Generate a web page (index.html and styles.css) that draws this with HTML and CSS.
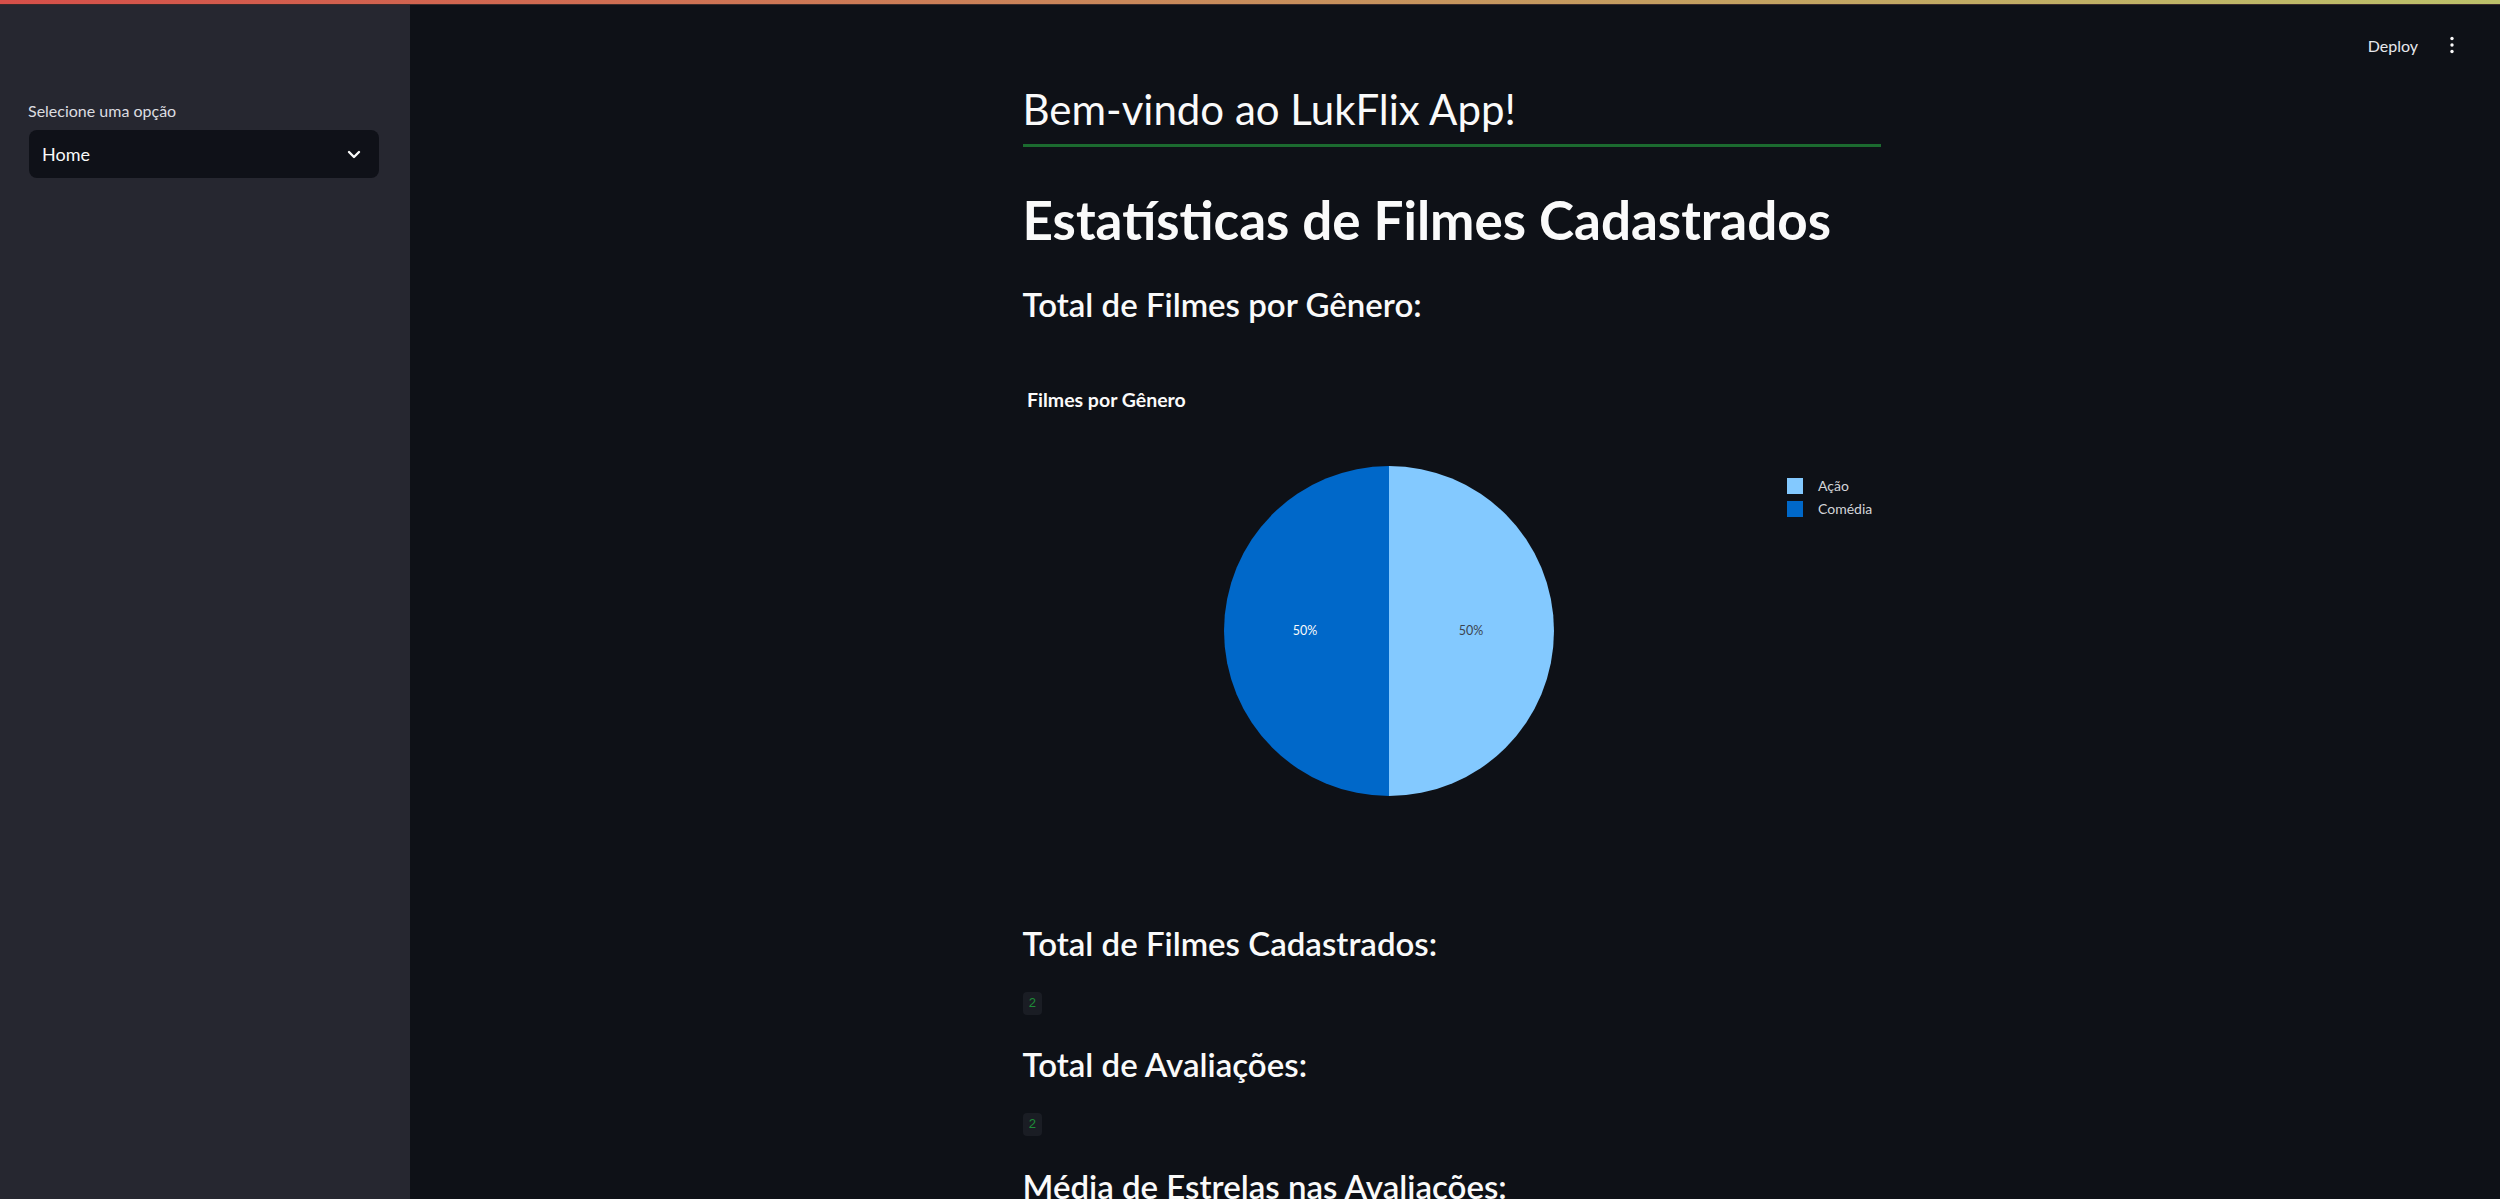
FILE: index.html
```html
<!DOCTYPE html>
<html lang="pt-BR">
<head>
<meta charset="utf-8">
<title>LukFlix App</title>
<link rel="stylesheet" href="styles.css">
</head>
<body>
<div class="decoration"></div>
<div class="app">
  <aside class="sidebar">
    <label class="sb-label">Selecione uma opção</label>
    <div class="select">
      <span class="select-value">Home</span>
      <svg class="chevron" width="14" height="9" viewBox="0 0 14 9"><path d="M2 2 L7 7 L12 2" fill="none" stroke="#fafafa" stroke-width="2.4" stroke-linecap="round" stroke-linejoin="round"/></svg>
    </div>
  </aside>
  <main class="main">
    <header class="topbar">
      <span class="deploy">Deploy</span>
      <svg class="kebab" width="4" height="18" viewBox="0 0 4 18"><circle cx="2" cy="2.5" r="1.7" fill="#fafafa"/><circle cx="2" cy="9" r="1.7" fill="#fafafa"/><circle cx="2" cy="15.5" r="1.7" fill="#fafafa"/></svg>
    </header>
    <section class="block">
      <h2 class="welcome">Bem-vindo ao LukFlix App!</h2>
      <hr class="divider">
      <h1 class="title">Estatísticas de Filmes Cadastrados</h1>
      <h3 class="sub sub-first">Total de Filmes por Gênero:</h3>
      <div class="chart">
        <svg width="858" height="540" viewBox="0 0 858 540">
          <text x="4" y="67" class="chart-title">Filmes por Gênero</text>
          <path d="M366 126 A165 165 0 0 1 366 456 Z" fill="#83c9ff"/>
          <path d="M366 456 A165 165 0 0 1 366 126 Z" fill="#0068c9"/>
          <text x="282" y="295" class="pct pct-light" text-anchor="middle">50%</text>
          <text x="448" y="295" class="pct pct-dark" text-anchor="middle">50%</text>
          <rect x="764" y="138" width="16" height="16" fill="#83c9ff"/>
          <text x="795" y="151" class="legend">Ação</text>
          <rect x="764" y="161" width="16" height="16" fill="#0068c9"/>
          <text x="795" y="174" class="legend">Comédia</text>
        </svg>
      </div>
      <h3 class="sub sub-a">Total de Filmes Cadastrados:</h3>
      <code class="badge badge-a">2</code>
      <h3 class="sub sub-b">Total de Avaliações:</h3>
      <code class="badge badge-b">2</code>
      <h3 class="sub sub-c">Média de Estrelas nas Avaliações:</h3>
    </section>
  </main>
</div>
</body>
</html>
```

FILE: styles.css
```css
html, body {
  margin: 0;
  padding: 0;
  height: 1199px;
  overflow: hidden;
  background: #0e1117;
  font-family: Lato, "Noto Sans", sans-serif;
  color: #fafafa;
}

.decoration {
  height: 4px;
  background: linear-gradient(90deg, #d64f49 0%, #c9885a 45%, #bcc16a 100%);
  border-bottom: 1px solid #3a2a2a;
}

.app {
  display: flex;
  height: 1194px;
}

.sidebar {
  width: 410px;
  flex: none;
  box-sizing: border-box;
  background: #262730;
  padding: 96px 31px 0 29px;
  display: flex;
  flex-direction: column;
}

.sb-label {
  font-size: 16px;
  line-height: 20px;
  color: #dcdde0;
  margin-left: -1px;
}

.select {
  margin-top: 9px;
  height: 48px;
  border-radius: 8px;
  background: #0f1118;
  display: flex;
  align-items: center;
  justify-content: space-between;
  padding: 0 18px 0 13px;
}

.select-value {
  font-size: 18px;
  color: #fafafa;
}

.chevron {
  display: block;
}

.main {
  flex: 1;
  display: flex;
  flex-direction: column;
  min-width: 0;
  padding-right: 7px;
}

.topbar {
  height: 80px;
  flex: none;
  display: flex;
  align-items: center;
  justify-content: flex-end;
  padding-right: 39px;
  gap: 32px;
}

.deploy {
  font-size: 16px;
  color: #e6e8ec;
}

.kebab {
  display: block;
}

.block {
  width: 858px;
  margin: 0 auto;
}

.welcome {
  margin: 0;
  font-size: 42px;
  line-height: 48px;
  font-weight: 400;
}

.divider {
  margin: 11px 0 0;
  border: 0;
  height: 3px;
  background: #1b6b2f;
}

.title {
  margin: 46px 0 0;
  font-size: 53px;
  line-height: 54px;
  font-weight: 700;
}

.sub {
  margin: 0;
  font-size: 33px;
  line-height: 37px;
  font-weight: 600;
}

.sub-first { margin-top: 39px; }

.chart {
  margin-top: 17px;
  height: 540px;
}

.chart svg { display: block; }

.chart-title {
  font-family: Lato, "Noto Sans", sans-serif;
  font-size: 19.5px;
  font-weight: 700;
  fill: #fafafa;
}

.pct {
  font-family: Lato, "Noto Sans", sans-serif;
  font-size: 12.5px;
}

.pct-light { fill: #fafafa; }
.pct-dark { fill: #3c4450; }

.legend {
  font-family: Lato, "Noto Sans", sans-serif;
  font-size: 14px;
  fill: #d3d5d9;
}

.sub-a { margin-top: 45px; }

.badge {
  display: block;
  width: max-content;
  font-family: "Liberation Mono", monospace;
  font-size: 13px;
  line-height: 23px;
  padding: 0 6px;
  border-radius: 4px;
  background: #1a1d24;
  color: #1e8a37;
}

.badge-a { margin-top: 30px; }
.sub-b { margin-top: 31px; }
.badge-b { margin-top: 30px; }
.sub-c { margin-top: 32px; }
```
